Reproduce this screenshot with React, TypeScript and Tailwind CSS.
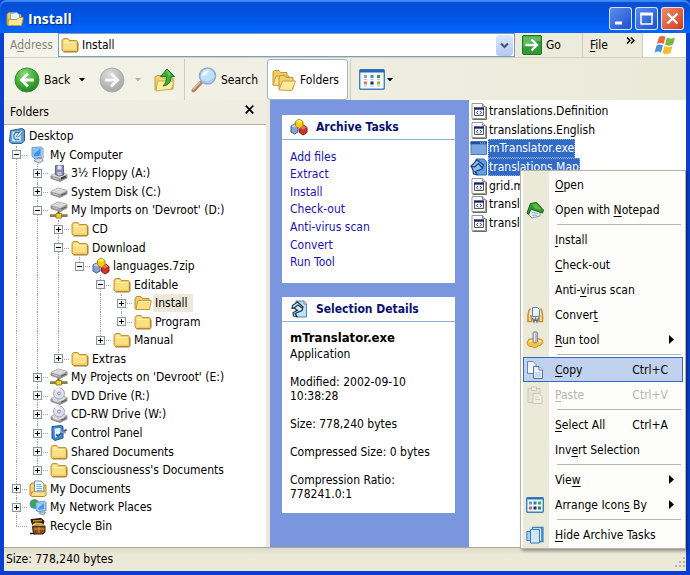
import type { ReactNode } from "react";
import { clsx } from "clsx";

interface TreeNode {
  label: string;
  icon: () => ReactNode;
  box?: "+" | "-";
  selected?: boolean;
  children?: TreeNode[];
}

interface MenuEntry {
  label: string;
  icon?: () => ReactNode;
  shortcut?: string;
  submenu?: boolean;
  active?: boolean;
  disabled?: boolean;
}

/* ---------- icons ---------- */

function Icon({ children, className = "size-[18px]", box = "0 0 18 18" }: { children: ReactNode; className?: string; box?: string }) {
  return (
    <svg viewBox={box} className={clsx("shrink-0", className)} fill="none" aria-hidden="true">
      {children}
    </svg>
  );
}

function FolderIcon() {
  return (
    <Icon>
      <path d="M1 14V4.5L2.5 2.5H7L8.5 4.5H15.5L16.5 6V14.5L15.5 15.5H2.5Z" fill="#f3cd62" stroke="#c0963a" />
      <path d="M2.500 5.500H8L9 6.500H15V13.500H2.500Z" fill="#fae083" />
      <path d="M3 4H6.500L7.500 5.500H3Z" fill="#fff3b8" />
      <path d="M2.500 6.500H14.500" stroke="#fff2b4" />
      <path d="M2.500 16H16L17 14.500V6.500" stroke="#a07c30" />
    </Icon>
  );
}

function OpenFolderIcon() {
  return (
    <Icon>
      <path d="M1 14V4.5L2.5 2.5H7L8.5 4.5H15V15.5H2Z" fill="#f2cb60" stroke="#b78f35" />
      <path d="M3.5 7.500L5 6.500H17.300L15.5 15.5H2Z" fill="#fbe083" stroke="#c09a38" />
      <path d="M5 7.500H16" stroke="#fff4bf" />
    </Icon>
  );
}

function TitleIcon() {
  return (
    <Icon>
      <path d="M1 14V4.500L2.500 2.500H7L8.500 4.500H15V15.500H2Z" fill="#f2cb60" stroke="#b08a2c" />
      <path d="M4 3.500L11 2.500L13.500 5V12H5Z" fill="#e4f3fd" stroke="#86a9c8" />
      <path d="M2.500 9.500H11L13 7.500H17.300L15.500 15.500H2Z" fill="#fce795" stroke="#c09a38" />
    </Icon>
  );
}

function DesktopIcon() {
  return (
    <Icon>
      <path d="M2.500 3.500L14 1.500L16.500 3V14L13.500 16.500H4L1.500 14.500Z" fill="#5c9bd0" stroke="#286199" />
      <path d="M4 4.500H13V14.500H4Z" fill="#dceefb" stroke="#8ab7dc" />
      <path d="M12.500 5.500H7.500L6 7.500V11L7.500 12.500H11.500" stroke="#3c7fb8" strokeWidth="1.300" />
      <path d="M8 9.500L13.500 3L15.500 3.500L10.500 10Z" fill="#fff" stroke="#3d6d9c" strokeWidth=".8" />
    </Icon>
  );
}

function ComputerIcon() {
  return (
    <Icon>
      <path d="M3 1.500L12 1L14 2.500V11L5 12.500L3 10Z" fill="#9cc9f3" stroke="#6f9dc9" />
      <path d="M4.500 3L11.500 2.500V9.500L5 10.500Z" fill="#3f92ea" />
      <path d="M4.500 3L11.500 2.500L5 8Z" fill="#84c3fb" />
      <path d="M5 15L8 12.500H13.500L14 15L10 17Z" fill="#d3dbe6" stroke="#8c98ac" />
      <path d="M14 3V13" stroke="#b9c8dc" strokeWidth="1.500" />
    </Icon>
  );
}

function DriveBase({ y = 0 }: { y?: number }) {
  return (
    <g transform={`translate(0 ${y})`}>
      <path d="M1 8.500L8 5L17 7.500V11L10 14.500L1 11.500Z" fill="#9c9c9c" stroke="#808080" strokeWidth=".8" />
      <path d="M1 8.500L8 5L17 7.500L10 11Z" fill="#d9d9d9" />
      <path d="M11 12.300L16 10" stroke="#505050" />
      <path d="M3 10.500L8.500 12.300" stroke="#c9c9c9" />
    </g>
  );
}

function DiskIcon() {
  return (
    <Icon>
      <DriveBase />
    </Icon>
  );
}

function FloppyIcon() {
  return (
    <Icon>
      <DriveBase y={3} />
      <path d="M5.500 1.500H13.500V11L9 12L5.500 10.500Z" fill="#8a87b4" stroke="#67658f" />
      <path d="M7.500 1.500H11.500V5.500H7.500Z" fill="#e6e6f2" />
      <path d="M7.500 8H11.500V11L9 11.500L7.500 11Z" fill="#c5c4dd" />
      <path d="M11 14.500L15.500 12.500" stroke="#333" strokeWidth="1.400" />
    </Icon>
  );
}

function NetDriveIcon() {
  return (
    <Icon>
      <DriveBase y={-4} />
      <path d="M8.500 10.500V14" stroke="#3c3c3c" strokeWidth="2" />
      <path d="M0 14.500H17.500" stroke="#4c4c4c" strokeWidth="2.500" />
      <path d="M0 14H17.500" stroke="#cdb752" />
      <path d="M6 12.500H11.500V17H6Z" fill="#f2cf37" stroke="#a07e13" />
    </Icon>
  );
}

function DiscIcon() {
  return (
    <Icon>
      <DriveBase y={3} />
      <circle cx="9" cy="6.500" r="5.500" fill="#dedef0" stroke="#a4a4bd" />
      <path d="M9 6.500L5 2.500A5.500 5.500 0 0 1 10 1.200Z" fill="#f8f4ff" />
      <circle cx="9" cy="6.500" r="1.500" fill="#fff" stroke="#8e8eaa" />
      <path d="M3 12.500L8.500 14.500L14 12" stroke="#f0f0f0" />
    </Icon>
  );
}

function ControlPanelIcon() {
  return (
    <Icon>
      <path d="M2 2.500L11.500 1.500L13 3V14L5 16.500L2 14Z" fill="#3d86d0" stroke="#1e558f" />
      <path d="M4.500 4.500L10.500 4V12L5 13.500Z" fill="#eaf5fe" />
      <path d="M6 10.500L8 12L16.500 5.500" stroke="#27568a" strokeWidth="1.800" />
      <path d="M11 8L16 8.500" stroke="#8a9db3" strokeWidth="2" />
    </Icon>
  );
}

function MyDocumentsIcon() {
  return (
    <Icon>
      <path d="M1 15V5L3 3H7V16H2Z" fill="#f5d06c" stroke="#b4882c" />
      <path d="M5.500 1H12L15 4V12H5.500Z" fill="#f3faff" stroke="#6d93bd" />
      <path d="M7.500 4.500H12M7.500 6.500H13M7.500 8.500H13M7.500 10.500H13" stroke="#69b3de" />
      <path d="M15 5H17V15L15.500 16.500H3L1.500 15L3 12H15Z" fill="#f7dc85" stroke="#b4882c" />
      <path d="M4 13H14.500" stroke="#fff3c0" />
    </Icon>
  );
}

function NetworkIcon() {
  return (
    <Icon>
      <circle cx="5.500" cy="6" r="4.800" fill="#3a8fd6" />
      <path d="M1 5C2 1.500 6 .5 8 2.500C7 5 6 5.500 6.500 8.500C3.500 9 1.500 7 1 5Z" fill="#41a544" />
      <path d="M7 4.500L15.500 3L17 4.500V12.500L9 14L7 12Z" fill="#a9cdf1" stroke="#6996c5" />
      <path d="M8.500 6L15 5V11L9.500 12Z" fill="#4a97e8" />
      <path d="M8.500 6L15 5L9 10Z" fill="#9ad0fb" />
      <path d="M10 15.500L12 14H16.500L15 17Z" fill="#cbd4e2" stroke="#8997ad" />
    </Icon>
  );
}

function RecycleIcon() {
  return (
    <Icon>
      <path d="M2 2.500L12 1.500L15 4L14 7.500L3.500 8Z" fill="#3a2410" stroke="#1e1206" />
      <path d="M4 4L13 3.500" stroke="#c98d35" strokeWidth="1.500" />
      <path d="M4 8L7 6.500L12 7L14.500 8.500" stroke="#f2ba3b" strokeWidth="2" />
      <path d="M3.500 9.500L16 9V15L14 17H4.500Z" fill="#8b4a1a" stroke="#3a1c08" />
      <path d="M5 12H15.500M10 10V16" stroke="#d79a3d" />
      <path d="M1 16.500H6" stroke="#2a1a0a" strokeWidth="1.500" />
    </Icon>
  );
}

function ArchiveIcon() {
  return (
    <Icon>
      <path d="M1 8L4.500 6L8 8V14L4.500 16L1 14Z" fill="#8aa0d0" stroke="#46598d" />
      <path d="M1.500 8L4.500 6.500L7.500 8L4.500 9.500Z" fill="#c4d2ef" />
      <path d="M9.500 9.500L13.500 7L17 9.500V14.500L13 17L9.500 14.500Z" fill="#cf3526" stroke="#851a12" />
      <path d="M10 9.500L13.500 7.500L16.500 9.500L13 11.500Z" fill="#ee7258" />
      <path d="M5.500 3.500L9 1L13 3.500V8L9.500 10.500L5.500 8Z" fill="#f7cb12" stroke="#b48608" />
      <path d="M6 3.500L9 1.500L12.500 3.500L9.500 5Z" fill="#fff06a" />
    </Icon>
  );
}

function DataFileIcon() {
  return (
    <Icon>
      <path d="M2 1.500H12.500L15.500 4.500V16.500H2Z" fill="#fff" stroke="#9a9a94" />
      <path d="M12.500 1.500V4.500H15.500" fill="#d8d8d2" stroke="#8a8a86" />
      <path d="M4.500 6.500H13.500V13.500H4.500Z" fill="#f4f4fb" stroke="#55556b" />
      <path d="M4 6.500H14" stroke="#182a75" strokeWidth="2.400" />
      <path d="M8 9L6.500 10.700L8 12.400M10 9L11.500 10.700L10 12.400" stroke="#42425c" />
      <path d="M16.500 5V17.500H2.500" stroke="#6c6c68" />
    </Icon>
  );
}

function ExeIcon() {
  return (
    <Icon>
      <path d="M1 2.500H16.500V15.500H1Z" fill="#7ba5e3" stroke="#4d79bf" />
      <path d="M.5 4H17" stroke="#2450a4" strokeWidth="2.600" />
      <path d="M10 4H11M12 4H13M14 4H15" stroke="#bcd4f8" />
    </Icon>
  );
}

function MapIcon() {
  return (
    <Icon>
      <path d="M6 1H14L16.500 4V17H6Z" fill="#5f9fe0" stroke="#2e6bb4" />
      <path d="M7 2L13.500 7L12 11L5 13.500L7 16.500L3.500 16L3 12L1 8Z" fill="#8fc1ef" stroke="#143f7c" strokeWidth="1.200" />
      <path d="M1 8L4.500 9L8.500 5.500L12 9.500" stroke="#143f7c" strokeWidth="1.200" />
    </Icon>
  );
}

function DetailsIcon() {
  return (
    <Icon>
      <path d="M6 1H14L16.500 4V17H6Z" fill="#bfe0f6" stroke="#4e86b0" />
      <path d="M7.500 2L13 7L12 10.500L5 13.500L7 16.500L3.500 16L3 12.500L7.500 10.500L4 8L2 8.500L2.500 5.500Z" fill="#d8edf9" stroke="#1c3350" strokeWidth="1.200" />
      <path d="M4 8L8 5L12 8" stroke="#1c3350" strokeWidth="1.100" />
      <path d="M14 1V4H16.500" fill="#fff" stroke="#4e86b0" />
    </Icon>
  );
}

function BackIcon() {
  return (
    <Icon className="size-[26px]" box="0 0 26 26">
      <defs>
        <radialGradient id="back" cx=".4" cy=".25" r=".8">
          <stop offset="0" stopColor="#8ade72" />
          <stop offset=".55" stopColor="#3fae35" />
          <stop offset="1" stopColor="#1f7e1d" />
        </radialGradient>
      </defs>
      <circle cx="13" cy="13" r="12" fill="url(#back)" stroke="#3c8a37" />
      <path d="M14 6.500L7.500 13L14 19.500M8 13H20" stroke="#fff" strokeWidth="3" />
    </Icon>
  );
}

function ForwardIcon() {
  return (
    <Icon className="size-[26px]" box="0 0 26 26">
      <defs>
        <radialGradient id="fwd" cx=".4" cy=".25" r=".8">
          <stop offset="0" stopColor="#dcdcda" />
          <stop offset="1" stopColor="#a3a3a0" />
        </radialGradient>
      </defs>
      <circle cx="13" cy="13" r="12" fill="url(#fwd)" stroke="#aeaeaa" />
      <path d="M12 6.500L18.500 13L12 19.500M6 13H18" stroke="#f7f7f5" strokeWidth="3" />
    </Icon>
  );
}

function UpIcon() {
  return (
    <Icon className="size-6" box="0 0 24 24">
      <path d="M2 22V9L4 7.500H8L9.500 10H20V21Z" fill="#f4d372" stroke="#c29c3c" />
      <path d="M4.500 13H21L18.500 21L3 23Z" fill="#fdeea3" stroke="#cfa948" />
      <path d="M14 1L21.500 8.500H18C18 13.500 16 17 10 18C13 15 13.500 12 13.500 8.500H7.500Z" fill="#3cb13a" stroke="#1d7a20" />
      <path d="M14 3L17 7H15.500" stroke="#93e082" />
    </Icon>
  );
}

function SearchIcon() {
  return (
    <Icon className="size-[26px]" box="0 0 26 26">
      <path d="M2.500 23.500L10 15.500" stroke="#b98265" strokeWidth="4" strokeLinecap="round" />
      <path d="M2 22.500L9 15" stroke="#e6bda3" strokeWidth="1.300" />
      <circle cx="16.500" cy="9" r="8" fill="#bfe0fa" stroke="#94aecb" strokeWidth="1.600" />
      <path d="M11 9C11 5 14 3 18 3.500C17 7 14 9 11 9Z" fill="#f0f9ff" />
      <path d="M12 14A7 7 0 0 0 22.500 11" stroke="#8cc0ec" />
    </Icon>
  );
}

function FoldersIcon() {
  return (
    <Icon className="size-6" box="0 0 24 24">
      <path d="M1 17V4L2.500 2.500H7L8.500 4.500H15V17Z" fill="#f2ca5f" stroke="#c1963a" />
      <path d="M1 17L4 8H17L14 18Z" fill="#fbe38d" stroke="#c99f42" />
      <path d="M7 21V9L8.500 7.500H12.500L14 9.500H21V21Z" fill="#f4d06a" stroke="#c1963a" />
      <path d="M7 22L10.500 13H23.500L20 22.500Z" fill="#fdea9c" stroke="#c99f42" />
    </Icon>
  );
}

function ViewsIcon() {
  return (
    <Icon className="h-[21px] w-[26px]" box="0 0 26 21">
      <rect x=".7" y=".7" width="24.600" height="19.600" rx="1" fill="#f5fafe" stroke="#3f83bd" strokeWidth="1.400" />
      <path d="M1 2H25" stroke="#2266b5" strokeWidth="3" />
      <path d="M5 6H8V9H5Z" fill="#a9a3a0" />
      <path d="M11.500 6H14.500V9H11.500Z" fill="#4a86c4" />
      <path d="M18 6H21V9H18Z" fill="#3f9845" />
      <path d="M5 12.500H8V15.500H5Z" fill="#dc7550" />
      <path d="M11.500 12.500H14.500V15.500H11.500Z" fill="#122e6b" />
      <path d="M18 12.500H21V15.500H18Z" fill="#b5a23a" />
      <path d="M5 10.500H8M11.500 10.500H14.500M18 10.500H21M5 17H8M11.500 17H14.500M18 17H21" stroke="#b7c3ce" />
    </Icon>
  );
}

function GoIcon() {
  return (
    <Icon className="size-5" box="0 0 20 20">
      <rect x=".5" y=".5" width="19" height="19" rx="1.500" fill="#349a36" stroke="#1f7426" />
      <path d="M1.500 1.500H18.500V6C12 6 6 8 1.500 13Z" fill="#63bd5d" />
      <path d="M9.500 4.500L15 10L9.500 15.500M3.500 10H14.500" stroke="#fff" strokeWidth="2.400" />
    </Icon>
  );
}

function WindowsLogo() {
  return (
    <Icon className="size-[22px]" box="0 0 22 22">
      <path d="M5 3C7 1.500 9.500 1.500 11.500 3L9.500 10C7.500 8.700 5.500 8.700 3 10Z" fill="#e8663a" />
      <path d="M13 3.500C15.500 5 18 5 21 3.500L19 10.500C16.500 12 13.500 12 11 10.500Z" fill="#7cb743" />
      <path d="M2.500 11.500C5 10 7 10 9 11.500L7 18.500C5 17 3 17 .5 18.500Z" fill="#4f92dc" />
      <path d="M10.500 12C13 13.500 15.500 13.500 18.500 12L16.500 19C13.500 20.500 11 20.500 8.500 19Z" fill="#f3bd35" />
    </Icon>
  );
}

function NotepadIcon() {
  return (
    <Icon>
      <path d="M3 8L6 6L14 10V15L6 17L3 14Z" fill="#e6eef0" stroke="#8da09e" />
      <path d="M1 12L4.500 2.500L10.500 1.500L17.500 9L16.500 12L9 9.500L5 8L2.500 13.500Z" fill="#2e9a2c" stroke="#14601a" />
      <path d="M5.500 3.500L10.500 2.500L15.500 8.500L9.500 8Z" fill="#55bb46" />
      <path d="M6 11.500L12 12.500M6 14L11 14.500" stroke="#86b3c8" />
    </Icon>
  );
}

function ConvertIcon() {
  return (
    <Icon>
      <path d="M6.500 1.500H11.500L13.500 3.500V10.500H6.500Z" fill="#e7f3fd" stroke="#5684b7" />
      <path d="M4.500 2.500C1.500 5 3 7 2 9V15.500H5.500V10H4M14.500 2.500C17 5 15.500 7 16.500 9V15.500H13V10H14.500" stroke="#c98b2b" strokeWidth="1.500" />
      <path d="M6.500 12L8 16L9.500 12.500L11 16L12.500 12" stroke="#5d6f8a" strokeWidth="1.300" />
      <path d="M3 11H5V15H3ZM14 11H16V15H14Z" fill="#f5d27b" />
    </Icon>
  );
}

function RunToolIcon() {
  return (
    <Icon>
      <path d="M3 8H6L8 6.500H11L13 8L16 8.500L17 11.500L15 14L12 15L9 17L6 15.500L2.500 15L1 12Z" fill="#f4c441" stroke="#c4902a" />
      <path d="M3.500 11C5 9 13 8.500 15 11" stroke="#fff0a8" strokeWidth="1.500" />
      <path d="M7 1.500C8 .5 10 .5 11.500 1.500V11C10 12 8 12 7 11Z" fill="#b9bcc4" stroke="#85899a" />
      <path d="M8.500 2V10.500" stroke="#eceef2" />
    </Icon>
  );
}

function CopyIcon() {
  return (
    <Icon>
      <path d="M1.500 .5H7L10 3.500V12.500H1.500Z" fill="#f2f7fd" stroke="#6b85ad" />
      <path d="M7.500 5.500H13L16.500 9V17.500H7.500Z" fill="#e8f2fd" stroke="#5573a3" />
      <path d="M13 5.500V9H16.500" fill="#fff" stroke="#5573a3" />
      <path d="M9 11H15V16H9Z" fill="#c3dbf5" />
    </Icon>
  );
}

function PasteIcon() {
  return (
    <Icon>
      <path d="M2 2.500H14V16.500H2Z" fill="#e6e3d4" stroke="#c9c6b8" />
      <path d="M5.500 1H10.500V4.500H5.500Z" fill="#f1efe4" stroke="#c9c6b8" />
      <path d="M7 7.500H13L16 10.500V17.500H7Z" fill="#f1efe4" stroke="#c9c6b8" />
      <path d="M9 11H13M9 13.500H14" stroke="#d2cfc1" />
    </Icon>
  );
}

function ArrangeIcon() {
  return (
    <Icon>
      <rect x=".7" y="1.700" width="16.600" height="14.600" rx="1" fill="#eff7fe" stroke="#3b80c3" strokeWidth="1.400" />
      <path d="M1 2.500H17" stroke="#2c70ba" strokeWidth="2" />
      <path d="M3 5.500H6V8.500H3Z" fill="#5d9bd6" />
      <path d="M7.500 5.500H10.500V8.500H7.500Z" fill="#2d7dbf" />
      <path d="M12 5.500H15V8.500H12Z" fill="#3fa84a" />
      <path d="M3 10.500H6V13.500H3Z" fill="#d95c50" />
      <path d="M7.500 10.500H10.500V13.500H7.500Z" fill="#16306e" />
      <path d="M12 10.500H15V13.500H12Z" fill="#338b3d" />
    </Icon>
  );
}

function HideTasksIcon() {
  return (
    <Icon>
      <path d="M6.500 1.500H17V15.500H6.500Z" fill="#e4f2fd" stroke="#4484be" strokeWidth="1.300" />
      <path d="M15 2H17V15H15Z" fill="#4a90d0" />
      <path d="M.8 5.500H5V14.500H.8Z" fill="#a9d2f2" stroke="#3c7cb8" />
      <path d="M4.500 3.500H13.500V17H4.500Z" fill="#cde6fa" stroke="#3c7cb8" />
    </Icon>
  );
}

function Caret({ className = "text-black" }: { className?: string }) {
  return (
    <Icon className={clsx("h-1 w-1.5", className)} box="0 0 6 4">
      <path d="M0 0H6L3 3.500Z" fill="currentColor" />
    </Icon>
  );
}

/* ---------- data ---------- */

const TREE: TreeNode[] = [
  {
    label: "My Computer",
    icon: ComputerIcon,
    box: "-",
    children: [
      { label: "3½ Floppy (A:)", icon: FloppyIcon, box: "+" },
      { label: "System Disk (C:)", icon: DiskIcon, box: "+" },
      {
        label: "My Imports on 'Devroot' (D:)",
        icon: NetDriveIcon,
        box: "-",
        children: [
          { label: "CD", icon: FolderIcon, box: "+" },
          {
            label: "Download",
            icon: FolderIcon,
            box: "-",
            children: [
              {
                label: "languages.7zip",
                icon: ArchiveIcon,
                box: "-",
                children: [
                  {
                    label: "Editable",
                    icon: FolderIcon,
                    box: "-",
                    children: [
                      { label: "Install", icon: OpenFolderIcon, box: "+", selected: true },
                      { label: "Program", icon: FolderIcon, box: "+" },
                    ],
                  },
                  { label: "Manual", icon: FolderIcon, box: "+" },
                ],
              },
            ],
          },
          { label: "Extras", icon: FolderIcon, box: "+" },
        ],
      },
      { label: "My Projects on 'Devroot' (E:)", icon: NetDriveIcon, box: "+" },
      { label: "DVD Drive (R:)", icon: DiscIcon, box: "+" },
      { label: "CD-RW Drive (W:)", icon: DiscIcon, box: "+" },
      { label: "Control Panel", icon: ControlPanelIcon, box: "+" },
      { label: "Shared Documents", icon: FolderIcon, box: "+" },
      { label: "Consciousness's Documents", icon: FolderIcon, box: "+" },
    ],
  },
  { label: "My Documents", icon: MyDocumentsIcon, box: "+" },
  { label: "My Network Places", icon: NetworkIcon, box: "+" },
  { label: "Recycle Bin", icon: RecycleIcon },
];

const FILES = [
  { name: "translations.Definition", icon: DataFileIcon },
  { name: "translations.English", icon: DataFileIcon },
  { name: "mTranslator.exe", icon: ExeIcon, selected: true },
  { name: "translations.Map", icon: MapIcon, selected: true },
  { name: "grid.map", icon: DataFileIcon },
  { name: "translations", icon: DataFileIcon },
  { name: "translator", icon: DataFileIcon },
];

const TASKS = ["Add files", "Extract", "Install", "Check-out", "Anti-virus scan", "Convert", "Run Tool"];

// "&" marks the accelerator letter
const MENU: MenuEntry[][] = [
  [{ label: "&Open" }, { label: "Open with &Notepad", icon: NotepadIcon }],
  [
    { label: "&Install" },
    { label: "&Check-out" },
    { label: "Anti-&virus scan" },
    { label: "Conver&t", icon: ConvertIcon },
    { label: "&Run tool", icon: RunToolIcon, submenu: true },
  ],
  [
    { label: "&Copy", icon: CopyIcon, shortcut: "Ctrl+C", active: true },
    { label: "&Paste", icon: PasteIcon, shortcut: "Ctrl+V", disabled: true },
  ],
  [{ label: "&Select All", shortcut: "Ctrl+A" }, { label: "Inv&ert Selection" }],
  [
    { label: "Vie&w", submenu: true },
    { label: "Arrange Icon&s By", icon: ArrangeIcon, submenu: true },
  ],
  [{ label: "&Hide Archive Tasks", icon: HideTasksIcon }],
];

/* ---------- pieces ---------- */

function Accel({ text }: { text: string }) {
  const at = text.indexOf("&");
  if (at < 0) return <span>{text}</span>;
  return (
    <span>
      {text.slice(0, at)}
      <u className="underline-offset-2">{text[at + 1]}</u>
      {text.slice(at + 2)}
    </span>
  );
}

function TitleBar() {
  const button = "flex size-[23px] items-center justify-center rounded-[3px] border border-white/80";
  return (
    <header className="flex h-[33px] items-center rounded-t-md bg-linear-to-b from-[#0a4bd0] via-[#0055e6] to-[#0366fb] pt-1 pr-1.5 pl-1.5 shadow-[inset_0_2px_1px_#3b8bf8]">
      <TitleIcon />
      <h1 className="flex-1 pl-1 font-['Open_Sans',sans-serif] text-[14px] font-bold text-white [text-shadow:1px_1px_1px_#0a2a80]">Install</h1>
      <div className="flex gap-[3px]">
        <button type="button" aria-label="Minimize" className={clsx(button, "bg-linear-to-br from-[#5c8cf0] to-[#1c50cf]")}>
          <Icon className="size-[17px]" box="0 0 17 17">
            <path d="M3 13H10" stroke="#fff" strokeWidth="3" />
          </Icon>
        </button>
        <button type="button" aria-label="Maximize" className={clsx(button, "bg-linear-to-br from-[#5c8cf0] to-[#1c50cf]")}>
          <Icon className="size-[17px]" box="0 0 17 17">
            <path d="M3 4V14H14V4Z" stroke="#fff" strokeWidth="1.500" />
            <path d="M2.250 4H14.750" stroke="#fff" strokeWidth="3" />
          </Icon>
        </button>
        <button type="button" aria-label="Close" className={clsx(button, "bg-linear-to-br from-[#ec8a6e] to-[#cf3a13]")}>
          <Icon className="size-[17px]" box="0 0 17 17">
            <path d="M3.500 3.500L13.500 13.500M13.500 3.500L3.500 13.500" stroke="#fff" strokeWidth="2.400" />
          </Icon>
        </button>
      </div>
    </header>
  );
}

function AddressBar() {
  return (
    <div className="flex h-[25px] items-stretch border-b border-[#d3d0c0] bg-[#edebdc]">
      <label htmlFor="address" className="flex w-[54px] items-center bg-[#f5f4ec] pl-1.5 text-[#85857c]">
        <Accel text="A&ddress" />
      </label>
      <div className="flex flex-1 items-center border border-[#7f9db9] bg-white pr-px pl-0.5">
        <FolderIcon />
        <input id="address" defaultValue="Install" className="min-w-0 flex-1 bg-transparent pl-[3px] outline-none" />
        <button type="button" aria-label="Show addresses" className="flex h-[21px] w-[17px] items-center justify-center rounded-sm bg-linear-to-b from-[#dbe6fe] to-[#b4c8f4]">
          <Icon className="size-[9px]" box="0 0 9 9">
            <path d="M1 2.500L4.500 6L8 2.500" stroke="#44587c" strokeWidth="2.200" />
          </Icon>
        </button>
      </div>
      <button type="button" className="flex w-[68px] items-center gap-1 border-r border-[#cfccbb] pl-[7px]">
        <GoIcon />
        Go
      </button>
      <button type="button" className="flex w-9 items-center pl-[7px]">
        <Accel text="&File" />
      </button>
      <button type="button" aria-label="More" className="flex w-6 items-start justify-center border-r border-[#cfccbb] pt-1">
        <Icon className="h-[7px] w-[9px]" box="0 0 9 7">
          <path d="M1 .5L4 3.500L1 6.500M5 .5L8 3.500L5 6.500" stroke="#000" strokeWidth="1.500" />
        </Icon>
      </button>
      <div className="flex w-[43px] items-center justify-center bg-white">
        <WindowsLogo />
      </div>
    </div>
  );
}

function Toolbar() {
  return (
    <div className="flex h-[42px] items-center bg-linear-to-r from-[#f4f3ea] to-[#ebe9d8] pt-px pl-2.5">
      <button type="button" className="flex w-[85px] items-center">
        <BackIcon />
        <span className="flex-1 pl-1 text-left">Back</span>
        <span className="w-5">
          <Caret />
        </span>
      </button>
      <button type="button" aria-label="Forward" className="flex w-[54px] items-center gap-2.5">
        <ForwardIcon />
        <Caret className="text-[#b5b3a8]" />
      </button>
      <button type="button" aria-label="Up" className="w-[31px]">
        <UpIcon />
      </button>
      <div className="h-full border-l border-[#cfccbb]" />
      <button type="button" className="flex w-[82px] items-center gap-1 pl-1.5">
        <SearchIcon />
        Search
      </button>
      <button type="button" aria-pressed="true" className="flex h-[41px] w-[81px] items-center gap-1 rounded-[3px] border border-[#98b5d2] bg-white pl-1">
        <FoldersIcon />
        Folders
      </button>
      <div className="ml-0.5 h-full border-l border-[#cfccbb]" />
      <button type="button" aria-label="Views" className="flex items-center gap-0.5 pl-2">
        <ViewsIcon />
        <Caret />
      </button>
    </div>
  );
}

function TreeRows({ nodes, guides = [] }: { nodes: TreeNode[]; guides?: boolean[] }) {
  return nodes.map((node, i) => {
    const last = i === nodes.length - 1;
    return [
      <TreeRow key={node.label} node={node} guides={guides} last={last} />,
      node.children && <TreeRows key={`${node.label}-children`} nodes={node.children} guides={[...guides, !last]} />,
    ];
  });
}

function TreeRow({ node, guides, last }: { node: TreeNode; guides: boolean[]; last: boolean }) {
  const NodeIcon = node.icon;
  return (
    <li className="flex min-h-[18px] flex-1 basis-0 items-stretch">
      {guides.map((on, i) => (
        <span key={i} className="flex w-[21px] justify-center">
          {on && <span className="border-l border-dotted border-[#a5a5a0]" />}
        </span>
      ))}
      <span className="relative flex w-[21px] items-center justify-center">
        <span className={clsx("absolute top-0 left-[10px] border-l border-dotted border-[#a5a5a0]", last ? "bottom-1/2" : "bottom-0")} />
        <span className="absolute top-1/2 right-0 left-[10px] border-t border-dotted border-[#a5a5a0]" />
        {node.box && (
          <button
            type="button"
            aria-label={`${node.box === "+" ? "Expand" : "Collapse"} ${node.label}`}
            className="relative flex size-[9px] items-center justify-center border border-[#8595a8] bg-[#f6f5ef]"
          >
            <span className="absolute h-px w-[5px] bg-black" />
            {node.box === "+" && <span className="absolute h-[5px] w-px bg-black" />}
          </button>
        )}
      </span>
      <span className="flex w-[21px] items-center justify-center">
        <NodeIcon />
      </span>
      <span className={clsx("flex items-center pr-[5px] pl-0.5 whitespace-nowrap", node.selected && "bg-[#ece9d8]")}>{node.label}</span>
    </li>
  );
}

function FoldersPane() {
  return (
    <section className="flex w-[262px] shrink-0 flex-col bg-white">
      <div className="flex h-[25px] items-center justify-between border-b border-[#b4b1a1] bg-[#efede1] pr-3 pl-1.5">
        <h2>Folders</h2>
        <button type="button" aria-label="Close folders" className="pb-1.5">
          <Icon className="size-[9px]" box="0 0 9 9">
            <path d="M.7 .7L8.300 8.300M8.300 .7L.7 8.300" stroke="#000" strokeWidth="1.700" />
          </Icon>
        </button>
      </div>
      <ul className="flex flex-1 flex-col pt-0.5 pb-3 pl-0.5">
        <li className="flex min-h-[18px] flex-1 basis-0 items-center">
          <span className="flex w-[21px] justify-center">
            <DesktopIcon />
          </span>
          <span className="pl-0.5">Desktop</span>
        </li>
        <TreeRows nodes={TREE} />
      </ul>
    </section>
  );
}

function Panel({ icon, title, children }: { icon: ReactNode; title: string; children: ReactNode }) {
  return (
    <section className="bg-white">
      <div className="flex h-[25px] items-center gap-2 border-b border-[#8fb1d9] pl-2">
        {icon}
        <h2 className="font-bold text-[#0a1070]">{title}</h2>
      </div>
      {children}
    </section>
  );
}

function TaskPane() {
  return (
    <aside className="flex w-[199px] shrink-0 flex-col gap-3.5 bg-[#7a96df] pt-[15px] pr-3.5 pl-3">
      <Panel icon={<ArchiveIcon />} title="Archive Tasks">
        <ul className="grid h-[143px] auto-rows-fr pt-2 pb-3 pl-2">
          {TASKS.map((task) => (
            <li key={task} className="flex items-center">
              <a href="#" className="text-[#1c12b4]">
                {task}
              </a>
            </li>
          ))}
        </ul>
      </Panel>
      <Panel icon={<DetailsIcon />} title="Selection Details">
        <div className="flex flex-col gap-3.5 pt-[9px] pr-2 pb-3 pl-2 leading-[14px]">
          <div>
            <h3 className="pb-0.5 text-[13px] leading-[14px] font-bold">mTranslator.exe</h3>
            <p>Application</p>
          </div>
          <p>
            Modified: 2002-09-10
            <br />
            10:38:28
          </p>
          <p>Size: 778,240 bytes</p>
          <p className="whitespace-nowrap">Compressed Size: 0 bytes</p>
          <p>
            Compression Ratio:
            <br />
            778241.0:1
          </p>
        </div>
      </Panel>
    </aside>
  );
}

function FileList() {
  return (
    <ul className="grid h-[132px] auto-rows-fr pt-0.5">
      {FILES.map(({ name, icon: FileIcon, selected }) => (
        <li key={name} className="flex items-center">
          <FileIcon />
          <span className={clsx("flex h-full items-center px-px", selected && "bg-[#316ac5] text-white outline-1 -outline-offset-1 outline-dotted outline-[#8fb0e6]")}>
            {name}
          </span>
        </li>
      ))}
    </ul>
  );
}

function ContextMenu() {
  return (
    <div
      role="menu"
      className="absolute right-0 -bottom-[2px] w-[166px] border border-[#b5b3a6] bg-[linear-gradient(to_right,#fdfdfb_2px,#ebe9d8_2px,#ebe9d8_28px,#fdfdfb_28px)] px-0.5 py-px shadow-[2px_2px_3px_rgba(0,0,0,0.35)]"
    >
      {MENU.map((group, i) => (
        <div key={i}>
          {i > 0 && <div className="my-0.5 mr-0.5 ml-[34px] border-t border-[#b9b7aa]" />}
          {group.map((entry) => (
            <MenuRow key={entry.label} entry={entry} />
          ))}
        </div>
      ))}
    </div>
  );
}

function MenuRow({ entry }: { entry: MenuEntry }) {
  const EntryIcon = entry.icon;
  return (
    <button
      type="button"
      role="menuitem"
      disabled={entry.disabled}
      className={clsx(
        "flex h-[25px] w-full items-center border pr-2 whitespace-nowrap",
        entry.active ? "border-[#316ac5] bg-[#c1d2ee]" : "border-transparent",
        entry.disabled && "text-[#b9b7ab]"
      )}
    >
      <span className="flex w-[31px] pl-0.5">{EntryIcon && <EntryIcon />}</span>
      <span className="flex-1 text-left">
        <Accel text={entry.label} />
      </span>
      {entry.shortcut && <span className="pr-1.5">{entry.shortcut}</span>}
      {entry.submenu && (
        <Icon className="h-[9px] w-[5px]" box="0 0 5 9">
          <path d="M0 0L5 4.500L0 9Z" fill="#000" />
        </Icon>
      )}
    </button>
  );
}

export default function App() {
  return (
    <div className="flex min-h-screen flex-col bg-[#0a3fd0] font-['DejaVu_Sans_Condensed','DejaVu_Sans',sans-serif] text-[12px] leading-4 text-black">
      <TitleBar />
      <div className="mx-1 mb-1 flex flex-1 flex-col bg-[#ece9d8]">
        <AddressBar />
        <Toolbar />
        <main className="relative flex flex-1">
          <FoldersPane />
          <div className="w-1 bg-[#ece9d8]" />
          <TaskPane />
          <div className="flex-1 bg-white pl-px">
            <FileList />
          </div>
          <ContextMenu />
        </main>
        <footer className="flex h-6 items-center justify-between border-t border-[#a9a798] bg-linear-to-b from-[#dddac9] to-[#ece9d8] to-30% pb-px pl-0.5">
          <span>Size: 778,240 bytes</span>
          <Icon className="size-3.5 self-end" box="0 0 14 14">
            <path d="M11 2H13M7 6H9M11 6H13M3 10H5M7 10H9M11 10H13" stroke="#b5b2a1" strokeWidth="2" />
          </Icon>
        </footer>
      </div>
    </div>
  );
}
